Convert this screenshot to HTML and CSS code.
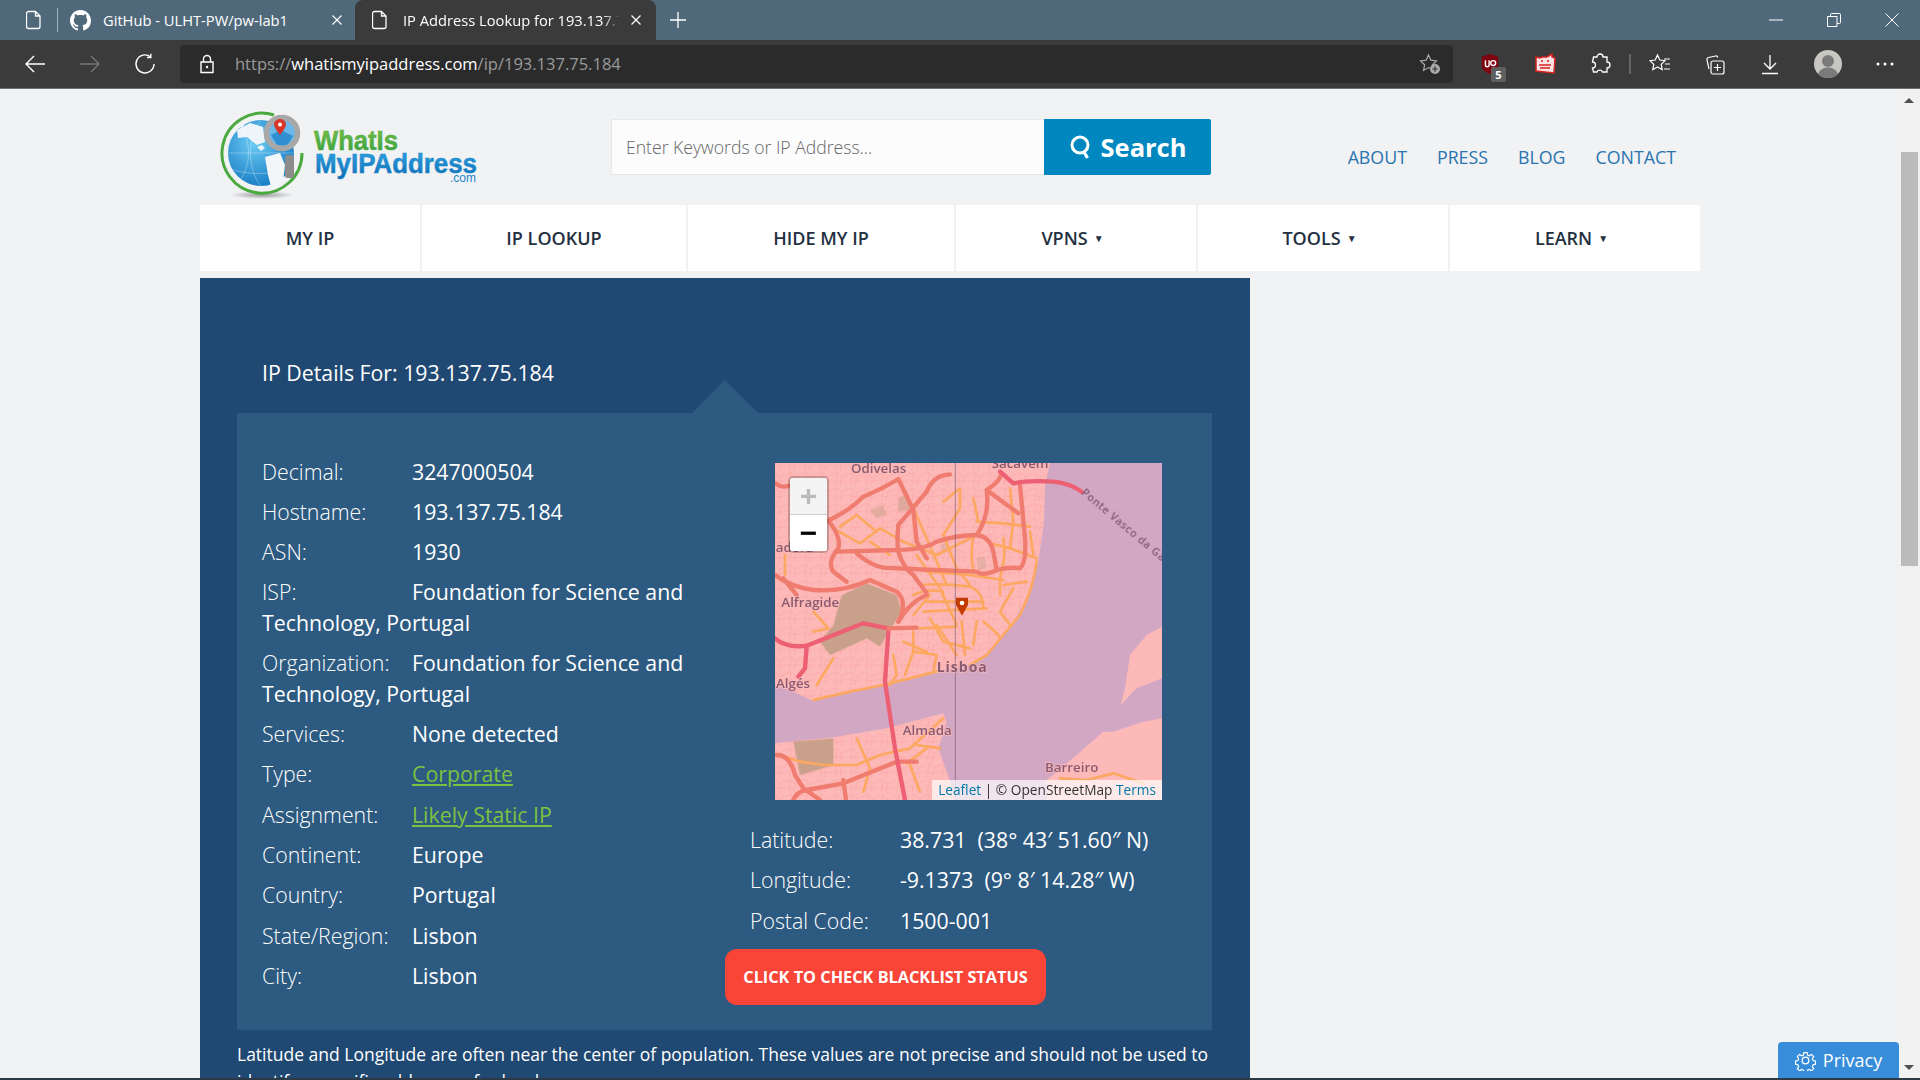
FILE: index.html
```html
<!DOCTYPE html>
<html lang="en">
<head>
    <meta charset="UTF-8">
    <meta name="viewport" content="width=device-width, initial-scale=1.0">
    <title>IP Address Lookup for 193.137.75.184</title>
    <link rel="stylesheet" href="styles.css">
</head>
<body>

    <svg class="defs" width="0" height="0">
        <symbol id="doc" viewBox="0 0 16 20"><path d="M2.5 1.5h7l4.5 4.5v10.5a2 2 0 0 1-2 2h-9.500a2 2 0 0 1-2-2v-13a2 2 0 0 1 2-2zM9.500 1.500v4.500h4.500" fill="none" stroke="#fff" stroke-width="1.300"/></symbol>
    </svg>

    <!-- browser frame -->
    <div class="tabstrip">
        <div class="tab-pinned"><svg class="ico-doc"><use href="#doc"/></svg></div>
        <div class="tab">
            <svg class="ico-gh" viewBox="0 0 16 16"><path fill="#fff" d="M8 0C3.58 0 0 3.58 0 8c0 3.54 2.29 6.53 5.47 7.59.4.07.55-.17.55-.38 0-.19-.01-.82-.01-1.49-2.01.37-2.53-.49-2.69-.94-.09-.23-.48-.94-.82-1.13-.28-.15-.68-.52-.01-.53.63-.01 1.08.58 1.23.82.72 1.21 1.87.87 2.33.66.07-.52.28-.87.51-1.07-1.78-.2-3.64-.89-3.64-3.95 0-.87.31-1.59.82-2.15-.08-.2-.36-1.02.08-2.12 0 0 .67-.21 2.2.82.64-.18 1.32-.27 2-.27.68 0 1.36.09 2 .27 1.53-1.04 2.2-.82 2.2-.82.44 1.1.16 1.92.08 2.12.51.56.82 1.27.82 2.15 0 3.07-1.87 3.75-3.65 3.95.29.25.54.73.54 1.48 0 1.07-.01 1.93-.01 2.2 0 .21.15.46.55.38A8.013 8.013 0 0016 8c0-4.42-3.58-8-8-8z"/></svg>
            <span class="tab-title">GitHub - ULHT-PW/pw-lab1</span>
            <svg class="ico-x" viewBox="0 0 12 12"><path d="M1.500 1.500l9 9M10.500 1.500l-9 9" stroke="#fff" stroke-width="1.200"/></svg>
        </div>
        <div class="tab tab-active">
            <svg class="ico-doc"><use href="#doc"/></svg>
            <span class="tab-title">IP Address Lookup for 193.137.75.184</span>
            <svg class="ico-x" viewBox="0 0 12 12"><path d="M1.500 1.500l9 9M10.500 1.500l-9 9" stroke="#fff" stroke-width="1.200"/></svg>
        </div>
        <svg class="ico-plus" viewBox="0 0 18 18"><path d="M9 1v16M1 9h16" stroke="#fff" stroke-width="1.300"/></svg>
        <div class="winctl">
            <svg viewBox="0 0 14 14"><path d="M0 7h14" stroke="#fff" stroke-width="1"/></svg>
            <svg viewBox="0 0 14 14"><path d="M.5 3.500h9.500v10h-9.500zM3.500 3.500v-2a1 1 0 0 1 1-1h8a1 1 0 0 1 1 1v8a1 1 0 0 1-1 1h-2.500" fill="none" stroke="#fff" stroke-width="1"/></svg>
            <svg viewBox="0 0 14 14"><path d="M.5.500l13 13M13.500.500l-13 13" stroke="#fff" stroke-width="1"/></svg>
        </div>
    </div>

    <div class="toolbar">
        <div class="tool"><svg viewBox="0 0 22 22"><path d="M21 11H2M10 3l-8 8 8 8" fill="none" stroke="#fff" stroke-width="1.400"/></svg></div>
        <div class="tool"><svg viewBox="0 0 22 22"><path d="M1 11h19M12 3l8 8-8 8" fill="none" stroke="#777" stroke-width="1.400"/></svg></div>
        <div class="tool"><svg viewBox="0 0 22 22"><path d="M16.500 3.800A9 9 0 1 0 20 11M16.800 .800v3.700h-3.800" fill="none" stroke="#fff" stroke-width="1.400"/></svg></div>
        <div class="addressbar">
            <svg class="ico-lock" viewBox="0 0 16 20"><path d="M2 8h12v10.500h-12zM4.500 8v-3a3.500 3.500 0 0 1 7 0v3" fill="none" stroke="#fff" stroke-width="1.400"/><circle cx="8" cy="13" r="1.200" fill="#fff"/></svg>
            <span class="url">https://<b>whatismyipaddress.com</b>/ip/193.137.75.184</span>
            <svg class="ico-star" viewBox="0 0 22 22"><path d="M9.500 2l2.400 5.200 5.600.7-4.100 3.900 1 5.600-4.900-2.800-4.900 2.800 1-5.600-4.100-3.900 5.600-.7z" fill="none" stroke="#aaa" stroke-width="1.200"/><circle cx="16" cy="16" r="5" fill="#aaa"/><path d="M16 13.200v5.600M13.200 16h5.600" stroke="#333" stroke-width="1.200"/></svg>
        </div>
        <div class="tool tool-first">
            <svg viewBox="0 0 22 24"><path d="M11 1l9 3v9c0 5-4 8-9 10-5-2-9-5-9-10v-9z" fill="#800410"/><path d="M6 8v5a2 2 0 0 0 4 0v-5" fill="none" stroke="#fff" stroke-width="1.500"/><circle cx="14.500" cy="11" r="2.700" fill="none" stroke="#fff" stroke-width="1.500"/></svg>
            <span class="ext-badge">5</span>
        </div>
        <div class="tool"><svg viewBox="0 0 22 22"><path d="M2 4l4 1 2-1 5 0 5-3 0 3 3 1-1 15-18-2z" fill="#fbe3e3" stroke="#d8231f" stroke-width="1.500"/><path d="M7 8h2M13 8h2M5 12h12M6 15h10" stroke="#d8231f" stroke-width="1.600"/></svg></div>
        <div class="tool"><svg viewBox="0 0 22 22"><path d="M8 4a3 3 0 0 1 6 0h4v5a3 3 0 0 1 0 6v4h-4.500a3 3 0 0 0-5.500 0h-3.500l-1-4a3 3 0 0 0 0-6l1-5z" fill="none" stroke="#fff" stroke-width="1.300"/></svg></div>
        <span class="tool-sep"></span>
        <div class="tool"><svg viewBox="0 0 22 22"><path d="M8.500 2l2.300 5 5.200.7-3.800 3.700 1 5.300-4.700-2.700-4.700 2.700 1-5.300-3.800-3.700 5.200-.7zM15 6h6M16 11h5M15 16h6" fill="none" stroke="#fff" stroke-width="1.200"/></svg></div>
        <div class="tool"><svg viewBox="0 0 22 22"><path d="M5 16l-2-9a2 2 0 0 1 1.500-2.500l7-1.500a2 2 0 0 1 2.300 1.500" fill="none" stroke="#fff" stroke-width="1.200"/><rect x="7" y="8" width="13" height="13" rx="2" fill="none" stroke="#fff" stroke-width="1.200"/><path d="M13.500 11v7M10 14.500h7" stroke="#fff" stroke-width="1.200"/></svg></div>
        <div class="tool"><svg viewBox="0 0 22 22"><path d="M11 2v14M5 10l6 6 6-6M3 20.500h16" fill="none" stroke="#fff" stroke-width="1.300"/></svg></div>
        <div class="tool tool-avatar"><svg class="avatar" viewBox="0 0 28 28"><circle cx="14" cy="14" r="14" fill="#c9c7c2"/><circle cx="14" cy="11" r="6" fill="#7b7b7b"/><path d="M4 24c2-5 6-6.500 10-6.500s8 1.500 10 6.500a14 14 0 0 1-20 0z" fill="#7b7b7b"/></svg></div>
        <div class="tool tool-dots"><svg viewBox="0 0 22 22"><circle cx="4" cy="11" r="1.500" fill="#fff"/><circle cx="11" cy="11" r="1.500" fill="#fff"/><circle cx="18" cy="11" r="1.500" fill="#fff"/></svg></div>
    </div>

    <div class="viewport">
        <div class="page">

            <header class="site-header">
                <svg class="logo" viewBox="0 0 270 100">
                    <defs>
                        <linearGradient id="greenText" x1="0" y1="0" x2="0" y2="1"><stop offset="0" stop-color="#7cc142"/><stop offset="1" stop-color="#2f9c46"/></linearGradient>
                        <linearGradient id="blueText" x1="0" y1="0" x2="0" y2="1"><stop offset="0" stop-color="#30a6e3"/><stop offset="1" stop-color="#0b6cb5"/></linearGradient>
                        <radialGradient id="sea" cx=".4" cy=".35" r=".8"><stop offset="0" stop-color="#6ccbf3"/><stop offset="1" stop-color="#0a6fbd"/></radialGradient>
                        <radialGradient id="shadow"><stop offset="0" stop-color="#999"/><stop offset="1" stop-color="#f1f2f4"/></radialGradient>
                    </defs>
                    <ellipse cx="47" cy="88" rx="32" ry="4" fill="url(#shadow)"/>
                    <path d="M59 8A40 40 0 1 0 87 46" fill="none" stroke="#4aa93f" stroke-width="3"/>
                    <circle cx="46" cy="46" r="33" fill="url(#sea)"/>
                    <path d="M22 23L35 16 48 20 50 35 42 38 32 30 23 31z" fill="#eef5fa"/>
                    <path d="M42 40l5-2 3 3-4 3zM24 18l4-2 1 3-3 2z" fill="#eef5fa"/>
                    <path d="M50 50L65 46 70 58 68 75 57 83 53 68z" fill="#f3f6f8"/>
                    <path d="M13 46h66M46 13c-14 16-14 50 0 66M26 20c10 16 10 36 0 52M15 62c18 6 40 6 58 0" fill="none" stroke="#fff" stroke-opacity=".3"/>
                    <rect x="70" y="48" width="9" height="23" rx="2.500" fill="#8c8c8c"/>
                    <circle cx="67" cy="26" r="15" fill="#6ab9e8"/>
                    <path d="M56 28l10-5 12 6-6 10-10-1z" fill="#2f8fd0"/>
                    <circle cx="67" cy="26" r="15.500" fill="none" stroke="#a8a8a8" stroke-width="5.500"/>
                    <path d="M65 12c-3.500 0-6 2.500-6 5.500 0 3.500 6 10.500 6 10.500s6-7 6-10.500c0-3-2.500-5.500-6-5.500z" fill="#d8362a"/>
                    <circle cx="65" cy="17.500" r="2" fill="#fff"/>
                    <text class="logo-green" x="99" y="43" textLength="84" lengthAdjust="spacingAndGlyphs">WhatIs</text>
                    <text class="logo-blue" x="100" y="66" textLength="162" lengthAdjust="spacingAndGlyphs">MyIPAddress</text>
                    <text class="logo-com" x="235" y="75">.com</text>
                </svg>
                <form class="search" onsubmit="event.preventDefault();">
                    <input class="search-input" type="text" placeholder="Enter Keywords or IP Address...">
                    <button class="search-btn" type="submit">
                        <svg viewBox="0 0 24 24"><circle cx="11" cy="10" r="8" fill="none" stroke="#fff" stroke-width="3"/><path d="M15 17l3.500 6" stroke="#fff" stroke-width="3.200"/></svg>
                        Search
                    </button>
                </form>
                <nav class="toplinks">
                    <a href="#">ABOUT</a>
                    <a href="#">PRESS</a>
                    <a href="#">BLOG</a>
                    <a href="#">CONTACT</a>
                </nav>
            </header>

            <nav class="mainnav">
                <a class="nav-myip" href="#">MY IP</a>
                <a class="nav-lookup" href="#">IP LOOKUP</a>
                <a class="nav-hide" href="#">HIDE MY IP</a>
                <a class="nav-vpns" href="#">VPNS <i>▼</i></a>
                <a class="nav-tools" href="#">TOOLS <i>▼</i></a>
                <a class="nav-learn" href="#">LEARN <i>▼</i></a>
            </nav>

            <main class="panel">
                <h1 class="panel-title">IP Details For: 193.137.75.184</h1>
                <section class="details">
                    <span class="details-notch"></span>
                    <div class="details-left">
                        <p class="row"><span class="lbl">Decimal:</span>3247000504</p>
                        <p class="row"><span class="lbl">Hostname:</span>193.137.75.184</p>
                        <p class="row"><span class="lbl">ASN:</span>1930</p>
                        <p class="row"><span class="lbl">ISP:</span>Foundation for Science and Technology, Portugal</p>
                        <p class="row"><span class="lbl">Organization:</span>Foundation for Science and Technology, Portugal</p>
                        <p class="row"><span class="lbl">Services:</span>None detected</p>
                        <p class="row"><span class="lbl">Type:</span><a href="#">Corporate</a></p>
                        <p class="row"><span class="lbl">Assignment:</span><a href="#">Likely Static IP</a></p>
                        <p class="row"><span class="lbl">Continent:</span>Europe</p>
                        <p class="row"><span class="lbl">Country:</span>Portugal</p>
                        <p class="row"><span class="lbl">State/Region:</span>Lisbon</p>
                        <p class="row"><span class="lbl">City:</span>Lisbon</p>
                    </div>
                    <div class="details-right">
                        <div class="map">
                            <svg class="map-tiles" viewBox="15 24 1161 1011">
                                <defs>
                                    <pattern id="urban" width="46" height="46" patternUnits="userSpaceOnUse">
                                        <path d="M0 12L18 8 30 20 46 14M12 46L18 8M30 20L26 46M6 30L28 34 46 30" fill="none" stroke="#f9a4a4" stroke-width="2"/>
                                    </pattern>
                                    <filter id="soft"><feGaussianBlur stdDeviation="1.200"/></filter>
                                </defs>
                                <rect x="15" y="24" width="1161" height="1011" fill="#d1a7c4"/>
                                <g fill="#fdb9b8" filter="url(#soft)">
                                    <path d="M15 24H840L825 90 822 200 805 320 770 430 720 520 650 600 600 630 500 650 380 680 240 710 130 738 70 710 15 690z"/>
                                    <path d="M15 865L200 845 350 820 520 775 530 800 505 880 560 1035H15z"/>
                                    <path d="M830 975L920 900 1000 830 1030 830 1120 800 1176 790V1035H830z"/>
                                    <path d="M1052 750L1065 700 1080 600 1130 540 1176 515V670L1100 700z"/>
                                </g>
                                <g fill="url(#urban)" filter="url(#soft)">
                                    <path d="M15 24H840L825 90 822 200 805 320 770 430 720 520 650 600 600 630 500 650 380 680 240 710 130 738 70 710 15 690z"/>
                                    <path d="M15 865L200 845 350 820 520 775 530 800 505 880 560 1035H15z"/>
                                </g>
                                <g fill="#c9a08a" filter="url(#soft)">
                                    <path d="M190 510L215 420 290 385 380 420 395 470 350 540 330 575 290 550 180 600 150 560z"/>
                                    <path d="M70 860L190 850 190 930 90 960z"/>
                                    <path d="M300 165l40-15 10 30-30 10z" opacity=".5"/>
                                    <path d="M385 130l30-15 5 50-35 5z" opacity=".6"/>
                                    <path d="M510 270l25-8 8 25-25 6z" opacity=".4"/>
                                    <path d="M620 310l25-5 5 35-25 5z" opacity=".4"/>
                                </g>
                                <g filter="url(#soft)">
                                    <g class="rd-primary">
                                        <path d="M190 220L270 265 330 220 400 260 500 300 620 240M620 200L700 205 780 215"/>
                                        <path d="M520 140L570 100 570 160 520 240 560 340 600 390M610 130L625 200"/>
                                        <path d="M610 240Q600 300 610 345M700 250Q710 300 690 370L690 420M720 100L730 200 720 280"/>
                                        <path d="M800 310L720 280 660 265M800 320Q790 400 750 480L700 540 650 600 600 630"/>
                                        <path d="M470 350L600 360 700 375M450 390Q520 385 600 395 640 410 640 460M430 420Q470 400 520 410"/>
                                        <path d="M430 480L480 420M470 440L640 440M460 470L650 460M450 520L560 515M480 490L520 560 600 580"/>
                                        <path d="M430 530L430 590 405 660M430 590L500 600 490 650M500 510Q540 570 560 600M400 560L470 590"/>
                                        <path d="M575 500L585 600M640 500Q680 530 690 550M440 300L510 400 560 510M620 500L610 570"/>
                                        <path d="M430 160L470 250 530 390M780 230L790 300M730 400L690 470 720 510M770 380L700 390"/>
                                        <path d="M130 470L175 520 130 530M190 610L140 690M45 300L45 360M370 600L380 660 360 690"/>
                                        <path d="M130 735L240 710 340 690 380 680 500 650M210 215L260 180 320 230M300 260L360 300"/>
                                        <path d="M30 900L90 920 160 930 260 930 330 900 420 880 520 790M260 850L300 940 280 1010M410 925L470 880M420 930L450 1010M440 870L510 880"/>
                                        <path d="M870 970L950 975 1030 955 1120 985"/>
                                    </g>
                                    <g class="rd-trunk">
                                        <path d="M15 85Q35 100 55 92M178 195Q240 165 280 125 340 100 385 72L430 165 440 260 470 310"/>
                                        <path d="M385 210Q420 170 470 110 490 60 540 58"/>
                                        <path d="M385 210Q380 260 385 290 400 340 430 360L470 415"/>
                                        <path d="M380 285Q460 285 500 260 560 240 620 240 660 245 670 290L680 345Q720 335 750 340 770 320 765 250L750 90"/>
                                        <path d="M260 295Q300 330 340 338L420 342 620 350Q640 365 680 345"/>
                                        <path d="M650 105L745 175M650 105Q660 180 620 240M650 105Q690 80 695 55"/>
                                        <path d="M178 200Q215 250 205 280 170 320 190 350L230 380"/>
                                        <path d="M15 360Q60 395 130 405 220 412 300 375L380 410Q415 440 385 500M40 370L80 420"/>
                                        <path d="M385 500Q420 440 470 420M200 290L380 285"/>
                                        <path d="M70 1035Q80 1010 110 1005L220 985 380 920 440 920M20 900Q60 900 75 960L100 1000 150 1035M220 975L228 1035"/>
                                    </g>
                                    <g class="rd-motor">
                                        <path d="M690 50L730 85Q780 75 850 80 900 85 935 110"/>
                                        <path d="M355 530Q350 600 345 680L375 880 405 1035"/>
                                        <path d="M15 550Q50 580 110 572L280 505 355 520"/>
                                        <path d="M110 575L105 640 85 665"/>
                                    </g>
                                    <path class="rd-link" d="M355 520L440 518"/>
                                </g>
                                <path d="M556 24V1035" stroke="#7c5a72" stroke-width="2"/>
                                <path d="M558 428h36v22q-8 14-18 32-10-18-18-32z" fill="#c23a00"/>
                                <circle cx="576" cy="444" r="7" fill="#fff"/>
                                <g class="map-label">
                                    <text x="243" y="54">Odivelas</text>
                                    <text x="665" y="40">Sacavém</text>
                                    <text x="-47" y="290">Amadora</text>
                                    <text x="34" y="457">Alfragide</text>
                                    <text x="18" y="699">Algés</text>
                                    <text class="map-city" x="500" y="650">Lisboa</text>
                                    <text x="398" y="840">Almada</text>
                                    <text x="825" y="952">Barreiro</text>
                                    <text class="map-road" transform="translate(932 116) rotate(40)">Ponte Vasco da Gama</text>
                                </g>
                            </svg>
                            <div class="zoomctl">
                                <span class="zoom-in">+</span>
                                <span class="zoom-out">−</span>
                            </div>
                            <div class="attrib"><a href="#">Leaflet</a> | © OpenStreetMap <a href="#">Terms</a></div>
                        </div>
                        <div class="geo">
                            <p class="row"><span class="lbl">Latitude:</span>38.731 &nbsp;(38° 43′ 51.60″ N)</p>
                            <p class="row"><span class="lbl">Longitude:</span>-9.1373 &nbsp;(9° 8′ 14.28″ W)</p>
                            <p class="row"><span class="lbl">Postal Code:</span>1500-001</p>
                        </div>
                        <a class="blacklist" href="#">CLICK TO CHECK BLACKLIST STATUS</a>
                    </div>
                </section>
                <p class="note">Latitude and Longitude are often near the center of population. These values are not precise and should not be used to identify a specific address or for legal purposes.</p>
            </main>

        </div>

        <div class="scrollbar">
            <span class="sb-up"></span>
            <span class="sb-thumb"></span>
            <span class="sb-down"></span>
        </div>

        <button class="privacy" type="button">
            <svg viewBox="0 0 24 24"><path d="M10 2h4l.6 3 2.400 1 2.600-1.700 2.800 2.800-1.700 2.600 1 2.400 3 .6v4l-3 .6-1 2.400 1.700 2.600-2.800 2.800-2.600-1.700-2.400 1-.6 3h-4l-.6-3-2.400-1-2.600 1.700-2.800-2.800 1.700-2.600-1-2.400-3-.6v-4l3-.6 1-2.400-1.700-2.600 2.800-2.800 2.600 1.700 2.400-1z" transform="translate(1.200 1.200) scale(.9)" fill="none" stroke="#fff" stroke-width="1.500"/><circle cx="12" cy="12" r="3.800" fill="none" stroke="#fff" stroke-width="1.500"/></svg>
            Privacy
        </button>
    </div>

    <div class="taskbar-edge"></div>

</body>
</html>
```

FILE: styles.css
```css
* {
    box-sizing: border-box;
}

html, body {
    margin: 0;
    height: 100%;
    overflow: hidden;
}

body {
    display: flex;
    flex-direction: column;
    height: 1080px;
    font-family: "Open Sans", "Noto Sans", sans-serif;
    background-color: #f1f2f4;
}

.defs {
    position: absolute;
}

/* browser frame */
.tabstrip {
    display: flex;
    align-items: center;
    flex: 0 0 40px;
    background-color: #50697a;
    color: #fff;
}

.tab-pinned {
    display: flex;
    align-items: center;
    justify-content: center;
    width: 58px;
    height: 24px;
    padding-left: 10px;
    border-right: 1px solid #9fb0bb;
}

.ico-doc {
    width: 16px;
    height: 20px;
    flex: none;
}

.ico-gh {
    width: 21px;
    height: 21px;
    flex: none;
    margin-left: 12px;
}

.tab {
    display: flex;
    align-items: center;
    width: 297px;
    height: 40px;
    font-size: 14.700px;
}

.tab-title {
    flex: 1;
    margin-left: 12px;
    overflow: hidden;
    white-space: nowrap;
}

.ico-x {
    width: 12px;
    height: 12px;
    flex: none;
    margin-right: 12px;
}

.tab-active {
    width: 301px;
    padding-left: 17px;
    background-color: #3b3b3b;
    border-radius: 8px 8px 0 0;
}

.tab-active .tab-title {
    margin: 0 10px 0 15px;
    -webkit-mask-image: linear-gradient(to right, #000 92%, transparent);
    mask-image: linear-gradient(to right, #000 92%, transparent);
}

.tab-active .ico-x {
    margin-right: 14px;
}

.ico-plus {
    width: 18px;
    height: 18px;
    margin-left: 13px;
}

.winctl {
    display: flex;
    gap: 44px;
    margin-left: auto;
    margin-right: 21px;
}

.winctl svg {
    width: 14px;
    height: 14px;
}

.toolbar {
    display: flex;
    align-items: center;
    flex: 0 0 49px;
    padding: 0 0 1px 7px;
    background-color: #3b3b3b;
    border-bottom: 1px solid #6e6e6e;
}

.tool {
    position: relative;
    display: flex;
    align-items: center;
    justify-content: center;
    width: 55px;
    height: 38px;
}

.tool svg {
    width: 22px;
    height: 22px;
}

.tool .avatar {
    width: 28px;
    height: 28px;
}

.tool-first {
    margin-left: 9px;
}

.tool-avatar {
    margin-left: 3px;
}

.tool-dots {
    margin-left: 2px;
}

.tool-sep {
    width: 2px;
    height: 20px;
    margin: 0 1px 0 2px;
    background-color: #666;
}

.ext-badge {
    position: absolute;
    left: 29px;
    top: 22px;
    width: 15px;
    height: 15px;
    border-radius: 2px;
    background-color: #5f5f5f;
    color: #fff;
    font-size: 11px;
    font-weight: 700;
    line-height: 15px;
    text-align: center;
}

.addressbar {
    display: flex;
    align-items: center;
    width: 1273px;
    height: 38px;
    margin-left: 8px;
    padding: 0 14px 0 19px;
    border-radius: 4px;
    background-color: #2b2b2b;
    color: #9a9a9a;
    font-size: 16.500px;
}

.ico-lock {
    width: 16px;
    height: 20px;
}

.url {
    margin-left: 20px;
}

.url b {
    font-weight: 400;
    color: #fff;
}

.ico-star {
    width: 22px;
    height: 22px;
    margin-left: auto;
    margin-right: -2px;
}

/* page */
.viewport {
    position: relative;
    display: flex;
    flex: 1;
    min-height: 0;
}

.page {
    flex: 1;
    min-width: 0;
    overflow: hidden;
    padding-left: 200px;
}

.site-header {
    display: flex;
    align-items: flex-start;
    width: 1500px;
    height: 116px;
}

.logo {
    width: 270px;
    height: 100px;
    flex: none;
    margin: 18px 0 0 15px;
}

.logo-green,
.logo-blue {
    font-family: "Liberation Sans", sans-serif;
    font-size: 27px;
    font-weight: 700;
    stroke-width: .5px;
}

.logo-green {
    fill: url(#greenText);
    stroke: #4fae3f;
}

.logo-blue {
    fill: url(#blueText);
    stroke: #1c87c9;
}

.logo-com {
    font-family: "Liberation Sans", sans-serif;
    font-size: 12px;
    fill: #1c87c9;
}

.search {
    display: flex;
    margin: 30px 0 0 126px;
}

.search-input {
    width: 433px;
    height: 56px;
    padding: 0 14px;
    border: 1px solid #e8e8e8;
    border-right: none;
    background-color: #fcfcfc;
    font-family: inherit;
    font-size: 17.600px;
    font-weight: 300;
}

.search-input::placeholder {
    color: #666;
    opacity: 1;
}

.search-btn {
    display: flex;
    align-items: center;
    justify-content: center;
    gap: 8px;
    width: 167px;
    height: 56px;
    border: none;
    border-radius: 0 2px 2px 0;
    background-color: #0087bf;
    color: #fff;
    font-family: inherit;
    font-size: 25.500px;
    font-weight: 700;
}

.search-btn svg {
    width: 24px;
    height: 24px;
}

.toplinks {
    display: flex;
    gap: 30px;
    margin: 56px 0 0 auto;
    padding-right: 24px;
    font-size: 17.800px;
}

.toplinks a {
    color: #2a74b0;
    text-decoration: none;
}

.mainnav {
    display: flex;
    gap: 2px;
    width: 1500px;
    height: 66px;
}

.mainnav a {
    display: flex;
    align-items: center;
    justify-content: center;
    gap: 6px;
    background-color: #fff;
    color: #24303f;
    font-size: 18px;
    font-weight: 600;
    text-decoration: none;
}

.mainnav i {
    margin-right: 7px;
    font-size: 10px;
    font-style: normal;
}

.nav-myip { width: 220px; }
.nav-lookup { width: 264px; }
.nav-hide { width: 266px; }
.nav-vpns { width: 240px; }
.nav-tools { width: 250px; }
.nav-learn { width: 250px; }

.panel {
    width: 1050px;
    margin-top: 7px;
    padding: 0 37px;
    background-color: #1f4872;
    color: #fff;
}

.panel-title {
    margin: 0;
    padding: 79px 0 0 25px;
    height: 135px;
    font-size: 21.300px;
    font-weight: 400;
    line-height: 32px;
}

.details {
    position: relative;
    display: flex;
    width: 975px;
    height: 617px;
    background-color: #2d5a80;
}

.details-notch {
    position: absolute;
    left: 455px;
    top: -33px;
    width: 0;
    height: 0;
    border-left: 33px solid transparent;
    border-right: 33px solid transparent;
    border-bottom: 33px solid #2d5a80;
}

.details-left {
    width: 488px;
    padding: 43.600px 30px 0 25px;
}

.details-right {
    flex: 1;
    padding-top: 50px;
}

.row {
    margin: 0 0 9.700px;
    font-size: 21.300px;
    line-height: 30.600px;
}

.lbl {
    display: inline-block;
    width: 150px;
    font-weight: 300;
}

.row a {
    color: #7cc142;
}

.map {
    position: relative;
    width: 387px;
    height: 337px;
    margin-left: 50px;
    overflow: hidden;
}

.map-tiles {
    display: block;
    width: 387px;
    height: 337px;
}

.rd-primary path,
.rd-trunk path,
.rd-motor path,
.rd-link {
    fill: none;
    stroke-linejoin: round;
    stroke-linecap: round;
}

.rd-primary path {
    stroke: #fca860;
    stroke-width: 8;
}

.rd-trunk path {
    stroke: #ef7c6e;
    stroke-width: 13;
}

.rd-motor path {
    stroke: #ed5f73;
    stroke-width: 13;
}

.rd-link {
    stroke: #ef7c6e;
    stroke-width: 13;
}

.map-label text {
    fill: #7c5068;
    fill-opacity: .9;
    stroke: #fdb9b8;
    stroke-width: 4px;
    paint-order: stroke;
    font-size: 40px;
    font-weight: 600;
}

.map-label .map-city {
    font-size: 42px;
    font-weight: 700;
    letter-spacing: 3px;
}

.map-label .map-road {
    font-size: 32px;
    stroke: none;
    letter-spacing: 2px;
}

.zoomctl {
    position: absolute;
    left: 13px;
    top: 13px;
    width: 41px;
    border: 2px solid rgba(0, 0, 0, .2);
    border-radius: 5px;
    background-clip: padding-box;
}

.zoomctl span {
    display: block;
    height: 36.500px;
    font-family: "Liberation Sans", sans-serif;
    font-size: 30px;
    font-weight: 700;
    line-height: 36px;
    text-align: center;
}

.zoom-in {
    background-color: #f4f4f4;
    border-bottom: 1px solid #ccc;
    border-radius: 2px 2px 0 0;
    color: #bbb;
}

.zoom-out {
    background-color: #fff;
    border-radius: 0 0 2px 2px;
    color: #000;
}

.attrib {
    position: absolute;
    right: 0;
    bottom: 0;
    height: 20px;
    padding: 0 6px;
    background-color: rgba(255, 255, 255, .7);
    color: #333;
    font-size: 13.700px;
    line-height: 20px;
    white-space: nowrap;
}

.attrib a {
    color: #0078a8;
    text-decoration: none;
}

.geo {
    margin: 25px 0 0 25px;
}

.blacklist {
    display: flex;
    align-items: center;
    justify-content: center;
    width: 321px;
    height: 56px;
    margin-top: 13px;
    border-radius: 12px;
    background-color: #f94438;
    color: #fff;
    font-size: 16.300px;
    font-weight: 700;
    text-decoration: none;
}

.note {
    width: 975px;
    margin: 11px 0 0;
    font-size: 17.500px;
    line-height: 27px;
}

/* scrollbar and cookie button */
.scrollbar {
    position: relative;
    flex: 0 0 20px;
    padding: 0 2px 0 1px;
    background-color: #f1f1f1;
}

.sb-up,
.sb-down {
    position: absolute;
    left: 4px;
    width: 0;
    height: 0;
    border-left: 5px solid transparent;
    border-right: 5px solid transparent;
}

.sb-up {
    top: 9px;
    border-bottom: 5px solid #505050;
}

.sb-down {
    bottom: 8px;
    border-top: 5px solid #505050;
}

.sb-thumb {
    display: block;
    margin-top: 63px;
    height: 414px;
    background-color: #bbb;
}

.privacy {
    position: absolute;
    left: 1778px;
    bottom: 0;
    display: flex;
    align-items: center;
    justify-content: center;
    gap: 7px;
    width: 121px;
    height: 36px;
    border: none;
    border-radius: 4px 4px 0 0;
    background-color: #378dda;
    color: #fff;
    font-family: inherit;
    font-size: 18px;
}

.privacy svg {
    width: 21px;
    height: 21px;
}

.taskbar-edge {
    flex: 0 0 2px;
    background-color: #2b3a45;
}
```
